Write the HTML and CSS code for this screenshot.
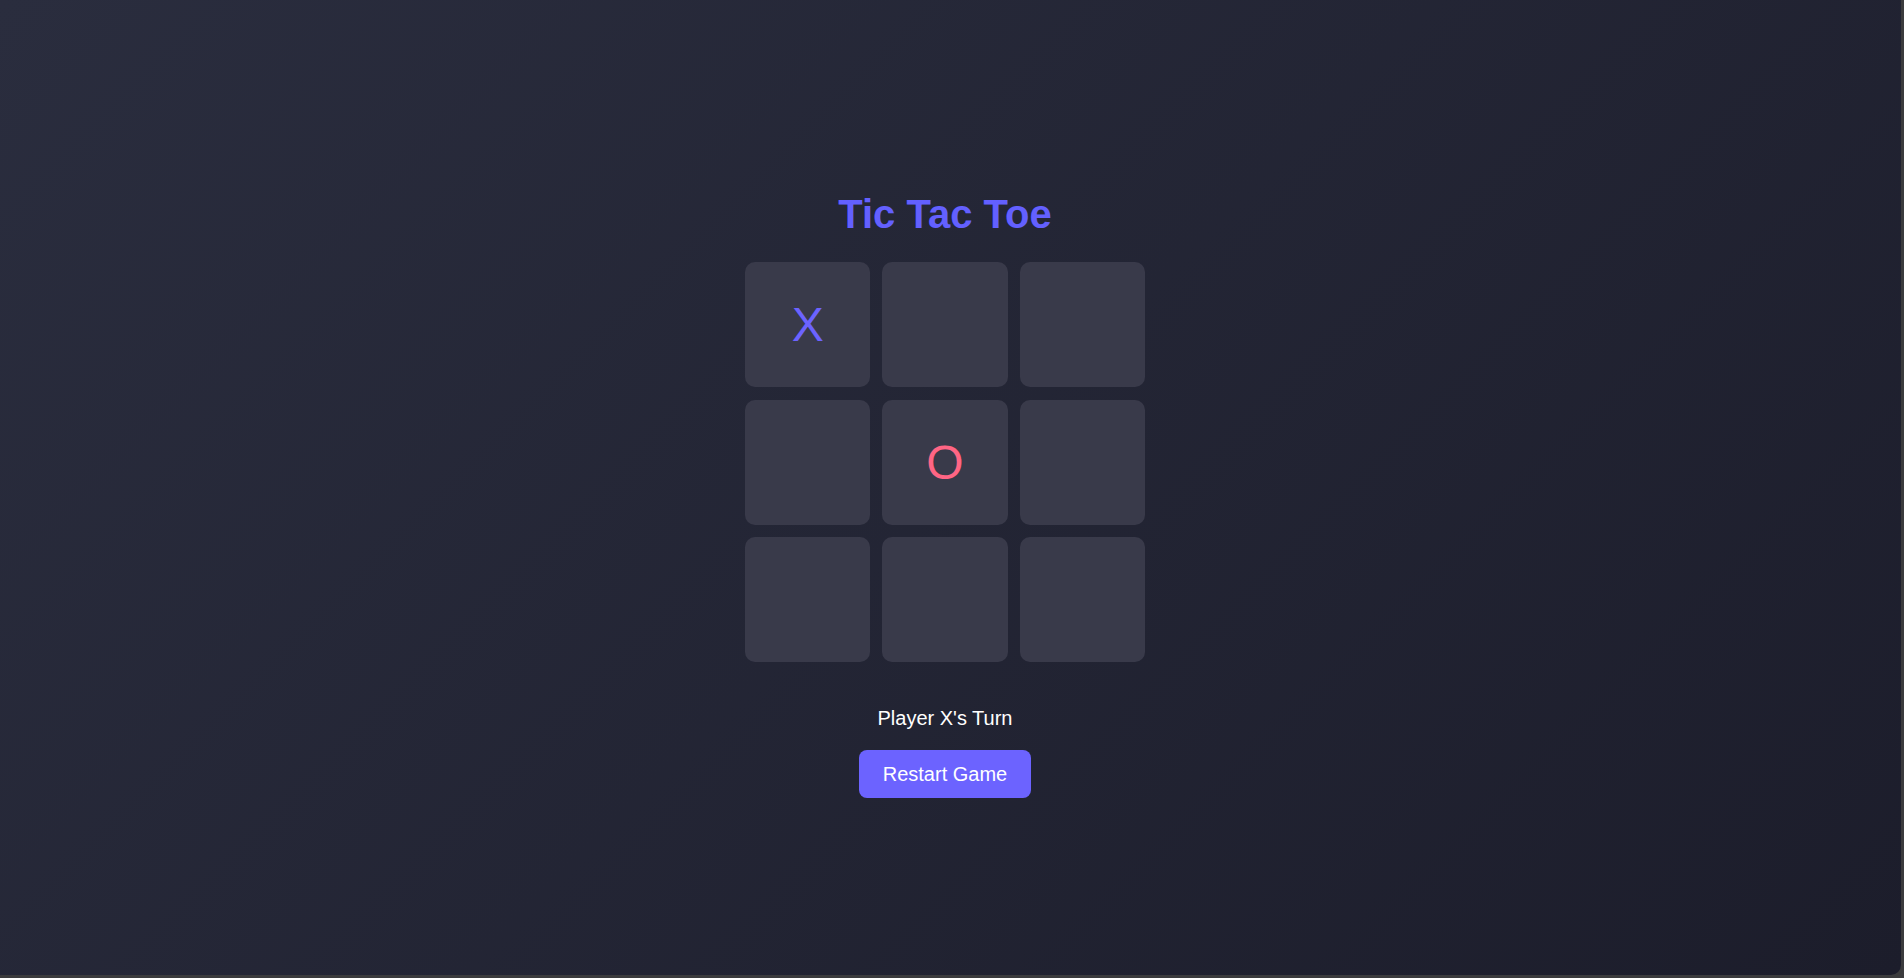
FILE: index.html
```html
<!DOCTYPE html>
<html lang="en">
<head>
<meta charset="utf-8">
<title>Tic Tac Toe</title>
<link rel="stylesheet" href="styles.css">
</head>
<body>
<div class="app">
  <main class="game">
    <h1 class="title">Tic Tac Toe</h1>
    <div class="board">
      <div class="cell x">X</div>
      <div class="cell"></div>
      <div class="cell"></div>
      <div class="cell"></div>
      <div class="cell o">O</div>
      <div class="cell"></div>
      <div class="cell"></div>
      <div class="cell"></div>
      <div class="cell"></div>
    </div>
    <p class="status">Player X's Turn</p>
    <button class="restart">Restart Game</button>
  </main>
</div>
</body>
</html>
```

FILE: styles.css
```css
html, body {
  margin: 0;
  padding: 0;
  height: 100%;
}
body {
  background: #3b3b3d;
  font-family: "Liberation Sans", Arial, sans-serif;
  overflow: hidden;
}
.app {
  height: calc(100vh - 3px);
  margin-right: 3px;
  border-bottom-right-radius: 10px;
  background: linear-gradient(135deg, #2a2d3e 0%, #1c1d2b 100%);
}
.game {
  display: flex;
  flex-direction: column;
  align-items: center;
  padding-top: 191px;
  padding-right: 11px;
}
.title {
  margin: 0;
  font-size: 40px;
  line-height: 46px;
  font-weight: 700;
  color: #6360ff;
}
.board {
  margin-top: 25px;
  width: 400px;
  display: grid;
  grid-template-columns: repeat(3, 1fr);
  grid-template-rows: repeat(3, 125px);
  gap: 12.5px 12px;
}
.cell {
  background: #393a4a;
  border-radius: 10px;
  display: flex;
  align-items: center;
  justify-content: center;
  font-size: 48px;
  color: #6c63ff;
}
.cell.o {
  color: #ff6584;
}
.status {
  margin: 45px 0 0;
  font-size: 20px;
  line-height: 23px;
  color: #ffffff;
}
.restart {
  margin-top: 20px;
  padding: 12px 24px;
  border: none;
  border-radius: 8px;
  background: #6c63ff;
  color: #ffffff;
  font-family: "Liberation Sans", Arial, sans-serif;
  font-size: 20px;
  line-height: 24px;
}
```
